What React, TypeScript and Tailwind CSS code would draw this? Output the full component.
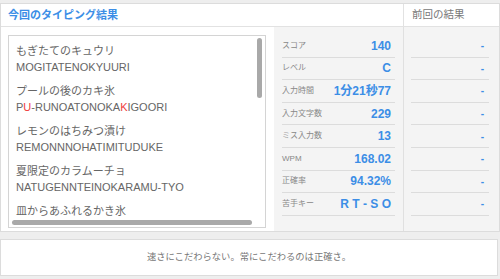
const FONT = '"Liberation Sans", "Noto Sans CJK JP", sans-serif';

type Word = { jp: string; roma: { t: string; miss?: boolean }[] };

const words: Word[] = [
  { jp: 'もぎたてのキュウリ', roma: [{ t: 'MOGITATENOKYUURI' }] },
  {
    jp: 'プールの後のカキ氷',
    roma: [
      { t: 'P' },
      { t: 'U', miss: true },
      { t: '-RUNOATONOKA' },
      { t: 'K', miss: true },
      { t: 'IGOORI' },
    ],
  },
  { jp: 'レモンのはちみつ漬け', roma: [{ t: 'REMONNNOHATIMITUDUKE' }] },
  { jp: '夏限定のカラムーチョ', roma: [{ t: 'NATUGENNTEINOKARAMU-TYO' }] },
  { jp: '皿からあふれるかき氷', roma: [{ t: 'SARAKARAAFURERUKAKIGOORI' }] },
];

const stats = [
  { label: 'スコア', value: '140' },
  { label: 'レベル', value: 'C' },
  { label: '入力時間', value: '1分21秒77' },
  { label: '入力文字数', value: '229' },
  { label: 'ミス入力数', value: '13' },
  { label: 'WPM', value: '168.02' },
  { label: '正確率', value: '94.32%' },
  { label: '苦手キー', value: 'R T - S O' },
];

export default function App() {
  return (
    <div className="w-[500px] h-[279px] bg-[#eeeeee] pt-[3px] overflow-hidden" style={{ fontFamily: FONT }}>
      {/* main result panel */}
      <div className="h-[229px] bg-white border border-[#dcdcdc] flex flex-col">
        {/* header row */}
        <div className="h-[23px] flex border-b border-[#e2e2e2] shrink-0">
          <div className="w-[402px] flex items-center pl-[7px] text-[11px] font-bold text-[#3c8ee6]">
            今回のタイピング結果
          </div>
          <div className="flex-1 border-l border-[#e2e2e2] flex items-center pl-[8px] text-[10.5px] text-[#777]">
            前回の結果
          </div>
        </div>

        {/* body */}
        <div className="flex-1 flex min-h-0">
          {/* word list */}
          <div className="w-[273px] pl-[7px] pr-[8px] pt-[8px] pb-[3px]">
            <div className="h-full border border-[#d4d4d4] flex flex-col">
              <div className="flex-1 flex min-h-0">
                <div className="flex-1 overflow-hidden pl-[7px] pt-[8px] text-[11px] text-[#666] leading-[15.5px]">
                  {words.map((w, i) => (
                    <div key={i} className="mb-[9px] whitespace-nowrap">
                      <div>{w.jp}</div>
                      <div>
                        {w.roma.map((r, j) => (
                          <span key={j} className={r.miss ? 'text-[#f03c3c]' : ''}>
                            {r.t}
                          </span>
                        ))}
                      </div>
                    </div>
                  ))}
                </div>
                <div className="w-[10px] pt-[2px] pl-[2px]">
                  <div className="w-[5px] h-[60px] rounded-full bg-[#a9a9a9]" />
                </div>
              </div>
              <div className="h-[10px] flex items-center pl-[3px] pr-[13px]">
                <div className="flex-1 h-[5px] rounded-full bg-[#a9a9a9]" />
              </div>
            </div>
          </div>

          {/* stats */}
          <div className="w-[129px] bg-[#f4f4f4] pl-[8px] pr-[8px] pt-[8px]">
            {stats.map((s, i) => (
              <div key={i} className="h-[22.6px] flex items-center justify-between border-b border-[#dcdcdc] pr-[4px]">
                <span className="text-[8px] text-[#888]">{s.label}</span>
                <span className="text-[12px] font-semibold text-[#3c8ee6]">{s.value}</span>
              </div>
            ))}
          </div>

          {/* previous result */}
          <div className="flex-1 bg-[#f4f4f4] border-l border-[#e0e0e0] pl-[7px] pr-[10px] pt-[8px]">
            {stats.map((_, i) => (
              <div key={i} className="h-[22.6px] flex items-center justify-end border-b border-[#dcdcdc] pr-[5px]">
                <span className="text-[10px] font-semibold text-[#3c8ee6]">-</span>
              </div>
            ))}
          </div>
        </div>
      </div>

      {/* motto */}
      <div className="mt-[7px] mr-[2px] h-[37px] bg-white border border-[#dcdcdc] flex items-center justify-center text-[9.3px] text-[#777]">
        速さにこだわらない。常にこだわるのは正確さ。
      </div>
    </div>
  );
}
